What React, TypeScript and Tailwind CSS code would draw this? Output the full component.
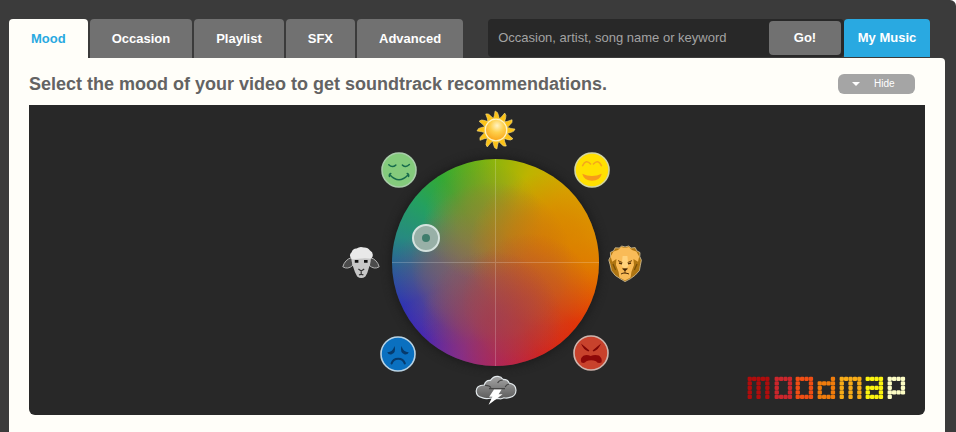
import { useState } from 'react';
import type { ReactNode } from 'react';

const tabs = ['Mood', 'Occasion', 'Playlist', 'SFX', 'Advanced'];

function Face({ fill, rim, children }: { fill: string; rim: string; children: ReactNode }) {
  return (
    <svg viewBox="0 0 36 36" className="size-full">
      <circle cx="18" cy="18" r="17" fill={fill} stroke={rim} strokeWidth="1.6" />
      {children}
    </svg>
  );
}

function CalmFace() {
  return (
    <Face fill="#84cb7c" rim="#a9cdaa">
      <g fill="none" stroke="#176b4c" strokeWidth="1.5" strokeLinecap="round">
        <path d="M7.8 12.8q3.4 3.4 7 .3M21.4 13.1q3.6 3 7-.5" />
        <path d="M9 23q9 9.400 18 0M8.400 24.400q-.6-2.400 1.400-2.800M26.200 21.600q2 .4 1.400 2.800" />
      </g>
    </Face>
  );
}

function HappyFace() {
  return (
    <Face fill="#ffe000" rim="#d3d6a0">
      <g fill="none" stroke="#f5a81c" strokeWidth="1.6" strokeLinecap="round">
        <path d="M8.600 13.600q3.400-6.800 8-1.600M19.400 12q4.600-5.200 8 1.600" />
      </g>
      <path d="M8.200 21.800q9.800 4.400 19.600 0-2 7-9.800 7t-9.800-7z" fill="#f79a19" />
    </Face>
  );
}

function SadFace() {
  return (
    <Face fill="#0a70c0" rim="#b9d3e4">
      <path d="M7.2 16.2q5 .4 7.4-6.2 1.8 7-3.4 8.4-2.8.4-4-2.2zM28.8 16.2q-5 .4-7.4-6.2-1.8 7 3.4 8.4 2.8.4 4-2.2z" fill="#063a6c" />
      <path d="M11.6 27.4q1.6-4.6 6.6-4.6t6.6 4.6" fill="none" stroke="#063a6c" strokeWidth="2.1" strokeLinecap="round" />
    </Face>
  );
}

function AngryFace() {
  return (
    <Face fill="#c8422c" rim="#cfb5ad">
      <path d="M8 8.6l8.4 6.8-1 1.2q-5-1.8-7.4-8zM28 8.6l-8.4 6.8 1 1.2q5-1.8 7.4-8z" fill="#7e0505" />
      <path d="M10.4 20.8q3.4-1.6 7.2.2 4.2-1.8 8.4-.4 3.8 3.2 2.4 7-3 1.4-5.4-1.4-5-2-9.6 0-2.2 2.6-5 1.2-1.8-4 2-6.6z" fill="#8e0808" />
    </Face>
  );
}

function Sun() {
  const rays = Array.from({ length: 12 }, (_, i) => i * 30 + 2);
  return (
    <svg viewBox="-20 -20 40 40" className="size-full">
      <defs>
        <radialGradient id="sun-core" cx="0.55" cy="0.3" r="0.7">
          <stop offset="0" stopColor="#fff3c4" />
          <stop offset="0.45" stopColor="#fed04c" />
          <stop offset="1" stopColor="#f9a51a" />
        </radialGradient>
      </defs>
      {rays.map((angle) => (
        <path
          key={angle}
          d="M-3.4-10.4Q-2-14 -1.6-19 1.4-18.2 1.8-15.4 2.400-13 3.4-10.4z"
          fill="#fcc318"
          stroke="#fbe38a"
          strokeWidth="0.5"
          transform={`rotate(${angle})`}
        />
      ))}
      <circle r="10.8" fill="url(#sun-core)" stroke="#fff3bf" strokeWidth="1.3" />
    </svg>
  );
}

function Sheep() {
  return (
    <svg viewBox="0 0 38 34" className="size-full">
      <path d="M9.6 11.6Q3 13.400 .8 20.8q5 3.2 10.200-1.6zM28.4 11.6q6.6 1.800 8.8 9.2-5 3.2-10.200-1.600z" fill="#4b4b4b" stroke="#b4b4b4" strokeWidth="1" />
      <path d="M9.800 10h18.800q.6 7-1.600 11.600-1.4 6-3.6 8.8-4.200 3.400-8.200 0-2.4-3.4-3.8-8.8Q9.200 17 9.800 10z" fill="#c7c7c7" />
      <path d="M9.4 12.8Q6.400 9 9.600 6.200 11 2.400 14.600 2.600 18-.2 22 1.600 26 1.400 28 4.600q3.600 2 2.600 5.800-.6 2.600-3.6 2.2-3.600-.6-7-.2-4 .2-6.400.6-2.400.8-4.200-.2z" fill="#e9e9e9" />
      <path d="M12.800 15.400h3.600M22 15.400h3.600" stroke="#111" strokeWidth="2.600" />
      <path d="M16.400 23l2.800 2 3-2M19.200 25v3M17 29q2.200-1.400 4.400 0" fill="none" stroke="#333" strokeWidth="1.200" />
    </svg>
  );
}

function Lion() {
  return (
    <svg viewBox="0 0 34 38" className="size-full">
      <path d="M17 2l3.600-1 2.600 2 4-.4 1.600 3.200 3.200 1.800-.2 4 1.600 3.600-1 5-1 5.400-4.200 4.600-4.600 3.400L17 36.600l-5-3-4.800-3.200-3.800-4.800-1.200-5.600-1.400-5 1.800-3.600-.2-4L5.600 5.800 7.200 2.800l4 .2 2.600-2z" fill="#ae7512" stroke="#d5c49c" strokeWidth="0.8" />
      <path d="M17 3l4-1 3 3 4.4 1.6 2.800 5-1.200 5.200-4.600-2.800.6 6-2.600 7-.8 5.400-5.600 3.200-5.600-3.200-.8-5.400-2.600-7 .4-6-4.200 2.800-1.600-5.200 2.800-5L10 5l3-3z" fill="#f9bb57" />
      <path d="M14.600 11h4.800l1 10-3.400 3-3.400-3z" fill="#ffd27c" />
      <path d="M10 15.600l4.400 2M24 15.600l-4.400 2" stroke="#6d420c" strokeWidth="1" />
      <path d="M11 18l3 .8M23 18l-3 .8" stroke="#4d2b05" strokeWidth="1.300" />
      <path d="M14.600 23.800h4.800L17 26zM17 26v2.200" fill="#3a2205" stroke="#4d2b05" strokeWidth="0.8" />
      <path d="M13 29q2-1.200 4-1t4 1" fill="none" stroke="#4d2b05" strokeWidth="1" />
      <path d="M5 19l2.600 6M29 19l-2.600 6" stroke="#79500a" strokeWidth="1.300" />
    </svg>
  );
}

function Storm() {
  return (
    <svg viewBox="0 0 42 30" className="size-full">
      <defs>
        <linearGradient id="cloud" x1="0" y1="0" x2="0" y2="1">
          <stop offset="0" stopColor="#a5a5a5" />
          <stop offset="1" stopColor="#5c5c5c" />
        </linearGradient>
      </defs>
      <path d="M7 22.600Q1.200 21.400 1.200 16q0-5.600 8-6Q11 4.800 15.400 5.400 18.600.8 23 1.400q3.400.4 4.800 3 5-.2 6.400 3.800 6.600 1 6.800 7-.2 6-6 7.200-3.400 1.200-6 .4-3 1.600-6 .6-4 1-7-.4-5 1.400-9-.4z" fill="url(#cloud)" stroke="#e2e8eb" strokeWidth="1.200" />
      <path d="M10 10.400q4.400-.2 6 2.400M27.800 5q-4 .4-5.200 3M14 13.600h16M34 9q-3 .6-3.800 3" fill="none" stroke="#454545" strokeWidth="1.100" />
      <path d="M19 14.600h7.600l-3 4.600h4L13.600 29.800l3.800-8h-3.200z" fill="#fff" />
    </svg>
  );
}

const moods = [
  { name: 'Bright', icon: <Sun />, place: 'left-[136px] top-[5px] h-10 w-10' },
  { name: 'Happy', icon: <HappyFace />, place: 'left-[234px] top-[47px] h-9 w-9' },
  { name: 'Powerful', icon: <Lion />, place: 'left-[268px] top-[140px] h-[38px] w-[34px]' },
  { name: 'Angry', icon: <AngryFace />, place: 'left-[233px] top-[230px] h-9 w-9' },
  { name: 'Dark', icon: <Storm />, place: 'left-[135px] top-[270px] h-[30px] w-[42px]' },
  { name: 'Sad', icon: <SadFace />, place: 'left-[40px] top-[231px] h-9 w-9' },
  { name: 'Gentle', icon: <Sheep />, place: 'left-[2px] top-[141px] h-[34px] w-[38px]' },
  { name: 'Calm', icon: <CalmFace />, place: 'left-[41px] top-[47px] h-9 w-9' },
];

function MoodWheel() {
  return (
    <div className="relative h-[310px] w-[312px]">
      <div className="absolute left-[52px] top-[54px] size-[207px] overflow-hidden rounded-full bg-[conic-gradient(#8fb40c_0deg,#bdb400_20deg,#d6a600_45deg,#e09500_75deg,#e48200_90deg,#e65800_108deg,#e82e00_128deg,#d81a1a_155deg,#b61e58_178deg,#7c289c_200deg,#4b28b0_222deg,#2a30b8_245deg,#2c5a9a_265deg,#278a80_285deg,#24a060_308deg,#34a934_328deg,#62ae1c_345deg,#8fb40c_360deg)] shadow-[0_0_8px_2px_#1c1c1c]">
        <div className="size-full bg-[radial-gradient(circle_at_48%_78%,#a03c50cc_0%,#a03c5080_16%,transparent_36%),radial-gradient(circle_at_66%_68%,#bc5030b3_0%,#bc503080_16%,transparent_34%),radial-gradient(circle_at_74%_44%,#d87800cc_0%,#d8780080_20%,transparent_40%),radial-gradient(circle_at_44%_30%,#8b8f30b3_0%,#8b8f3080_14%,transparent_32%),radial-gradient(circle_at_32%_58%,#766070cc_0%,#76607080_18%,transparent_36%),radial-gradient(circle_at_48%_50%,#a0683f_0%,#a0683fe6_16%,#a0683f80_32%,transparent_54%)]">
          <div className="grid size-full grid-cols-2 grid-rows-2">
            <span className="border-b border-r border-white/20" />
            <span className="border-b border-white/20" />
            <span className="border-r border-white/20" />
          </div>
        </div>
      </div>
      <button
        aria-label="Mood position"
        className="absolute left-[72px] top-[119px] flex size-7 items-center justify-center rounded-full border-2 border-[#d5e3df] bg-[#98b0a7]"
      >
        <span className="size-2 rounded-full bg-[#3f7d6c]" />
      </button>
      {moods.map((mood) => (
        <button key={mood.name} aria-label={mood.name} className={`absolute ${mood.place}`}>
          {mood.icon}
        </button>
      ))}
    </div>
  );
}

// Each letter of the logo is a small dot matrix.
const logo = [
  { x: 0, color: '#b00c0c', rows: ['#####', '#.#.#', '#.#.#', '#.#.#', '#.#.#'] },
  { x: 27, color: '#cb262c', rows: ['####', '#..#', '#..#', '#..#', '####'] },
  { x: 48, color: '#f04e14', rows: ['####', '#..#', '#..#', '#..#', '####'] },
  { x: 70, color: '#f07c0c', rows: ['...#', '####', '#..#', '#..#', '####'] },
  { x: 92, color: '#f8ac18', rows: ['#####', '#.#.#', '#.#.#', '#.#.#', '#.#.#'] },
  { x: 118, color: '#fcf410', rows: ['####', '...#', '####', '#..#', '####'] },
  { x: 140, color: '#fcfcc4', rows: ['####', '#..#', '#..#', '####', '#...'] },
];

function Logo() {
  return (
    <svg viewBox="0 0 160 24" role="img" aria-label="moodmap" className="absolute bottom-[15px] right-[18px] h-6 w-40">
      {logo.map((letter) => (
        <g key={letter.x} fill={letter.color}>
          {letter.rows.flatMap((row, y) =>
            [...row].map((dot, x) =>
              dot === '#' ? (
                <rect key={`${x}-${y}`} x={letter.x + 0.6 + x * 4.4} y={0.8 + y * 4.5} width="4.3" height="4.2" rx="1.2" />
              ) : null,
            ),
          )}
        </g>
      ))}
    </svg>
  );
}

export default function App() {
  const [active, setActive] = useState('Mood');
  const [open, setOpen] = useState(true);

  return (
    <div className="bg-white font-['Liberation_Sans',Arial,sans-serif]">
      <div className="flex min-h-screen flex-col rounded-tr-md bg-[#3b3b3b] pl-[9px] pr-[11px] pt-[19px]">
        <header className="flex h-[39px] pr-[15px]">
          <nav className="flex gap-[2px]">
            {tabs.map((tab) => (
              <button
                key={tab}
                onClick={() => setActive(tab)}
                className={`rounded-t px-[22px] text-[13px] font-bold ${
                  tab === active ? 'bg-[#fffef9] text-[#29a9e1]' : 'bg-[#717171] text-white'
                }`}
              >
                {tab}
              </button>
            ))}
          </nav>
          <form
            onSubmit={(e) => e.preventDefault()}
            className="mb-px ml-[25px] flex min-w-0 flex-1 rounded bg-[#282828] py-[2px] pl-[2px] pr-[3px]"
          >
            <input
              type="text"
              aria-label="Search music"
              placeholder="Occasion, artist, song name or keyword"
              className="min-w-0 flex-1 px-2 text-[13px] text-white outline-none placeholder:text-[#a3a3a3]"
            />
            <button type="submit" className="w-[72px] rounded bg-[#717171] text-[13px] font-bold text-white">
              Go!
            </button>
          </form>
          <a
            href="#my-music"
            className="mb-px flex w-[86px] items-center justify-center rounded-t bg-[#29a9e1] text-[13px] font-bold text-white"
          >
            My Music
          </a>
        </header>

        <main className="flex-1 rounded-tr bg-[#fffef9] px-5 pb-4">
          <div className="flex h-[47px] items-center justify-between pr-[10px]">
            <h1 className="pt-1 text-lg font-bold text-[#636363]">
              Select the mood of your video to get soundtrack recommendations.
            </h1>
            <button
              onClick={() => setOpen(!open)}
              className="mt-1 flex h-5 w-[77px] items-center gap-[14px] rounded-md bg-[#a5a5a5] pl-[14px] text-[10px] text-white"
            >
              <svg viewBox="0 0 8 4" className="h-1 w-2" fill="currentColor">
                <path d="M0 0h8L4 4z" />
              </svg>
              {open ? 'Hide' : 'Show'}
            </button>
          </div>
          {open && (
            <section className="relative flex justify-center rounded-b-md bg-[#282828] pl-[38px]">
              <MoodWheel />
              <Logo />
            </section>
          )}
        </main>
      </div>
    </div>
  );
}
